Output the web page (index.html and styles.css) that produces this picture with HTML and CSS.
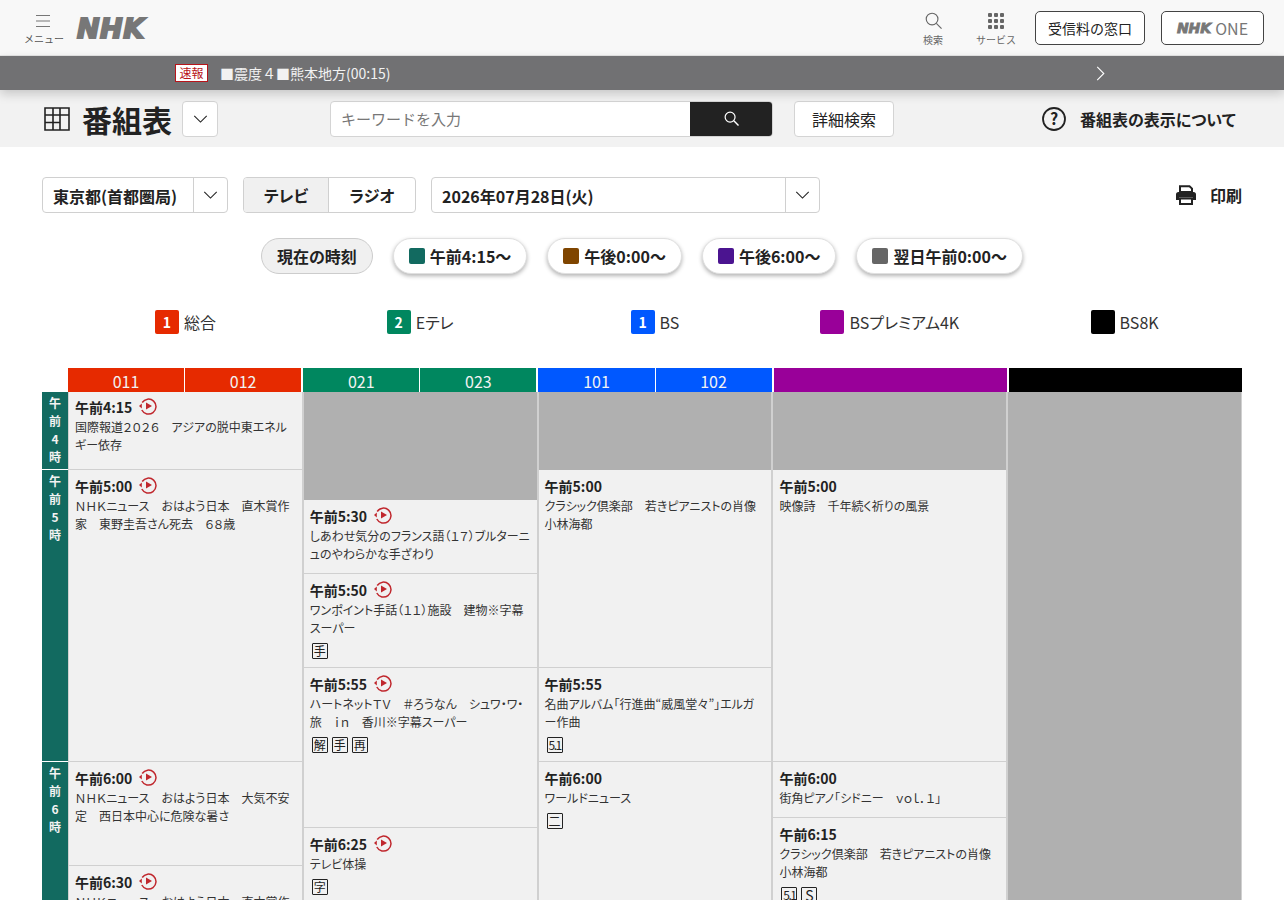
FILE: index.html
```html
<!DOCTYPE html>
<html lang="ja">
<head>
    <meta charset="UTF-8">
    <title>番組表</title>
    <link rel="stylesheet" href="styles.css">
</head>
<body>
    <header class="site-header">
        <div class="menu">
            <svg class="menu-icon" viewBox="0 0 14 14"><path d="M0 1.500h14M0 7h14M0 12.500h14" stroke="#777" stroke-width="1.2" fill="none"/></svg>
            <span>メニュー</span>
        </div>
        <span class="logo">NHK</span>
        <div class="header-right">
            <div class="head-tool tool-search">
                <svg viewBox="0 0 18 18" width="17" height="17"><circle cx="7.500" cy="7.500" r="6.200" stroke="#666" stroke-width="1.200" fill="none"/><path d="M12 12l5.500 5.500" stroke="#666" stroke-width="1.200"/></svg>
                <span>検索</span>
            </div>
            <div class="head-tool tool-service">
                <svg viewBox="0 0 16 16" width="16" height="16" fill="#666"><rect x="0" y="0" width="4" height="4" rx="1"/><rect x="6" y="0" width="4" height="4" rx="1"/><rect x="12" y="0" width="4" height="4" rx="1"/><rect x="0" y="6" width="4" height="4" rx="1"/><rect x="6" y="6" width="4" height="4" rx="1"/><rect x="12" y="6" width="4" height="4" rx="1"/><rect x="0" y="12" width="4" height="4" rx="1"/><rect x="6" y="12" width="4" height="4" rx="1"/><rect x="12" y="12" width="4" height="4" rx="1"/></svg>
                <span>サービス</span>
            </div>
            <a class="head-btn btn-fee">受信料の窓口</a>
            <a class="head-btn btn-one"><span class="one-logo">NHK</span><span class="one-word">ONE</span></a>
        </div>
    </header>

    <div class="ticker">
        <span class="ticker-badge">速報</span>
        <span class="ticker-text">■震度４■熊本地方(00:15)</span>
        <svg class="ticker-arrow" viewBox="0 0 9 16" width="9" height="15"><path d="M1 1l7 7-7 7" stroke="#fff" stroke-width="1.2" fill="none"/></svg>
    </div>

    <div class="sub-header">
        <svg class="title-icon" viewBox="0 0 26 24" width="26" height="24"><path d="M1 1h24v22H1zM1 8h24M1 15.500h15M9 1v22M16 1v22" stroke="#222" stroke-width="1.600" fill="none"/></svg>
        <h1>番組表</h1>
        <button class="square-btn"><svg viewBox="0 0 16 9" width="15" height="8"><path d="M1 1l7 7 7-7" stroke="#222" stroke-width="1.2" fill="none"/></svg></button>
        <div class="search-box">
            <span class="search-input">キーワードを入力</span>
            <span class="search-go"><svg viewBox="0 0 16 16" width="15" height="15"><circle cx="6.500" cy="6.500" r="5.300" stroke="#fff" stroke-width="1.300" fill="none"/><path d="M10.500 10.500l5 5" stroke="#fff" stroke-width="1.500"/></svg></span>
        </div>
        <button class="detail-btn">詳細検索</button>
        <div class="about">
            <svg viewBox="0 0 24 24" width="24" height="24"><circle cx="12" cy="12" r="11" stroke="#222" stroke-width="1.800" fill="none"/><text x="12" y="17.500" text-anchor="middle" class="about-mark">?</text></svg>
            <span>番組表の表示について</span>
        </div>
    </div>

    <main class="page">
        <div class="controls">
            <div class="select area-select"><span class="select-label">東京都(首都圏局)</span><span class="select-arrow"><svg viewBox="0 0 16 9" width="15" height="8"><path d="M1 1l7 7 7-7" stroke="#222" stroke-width="1.2" fill="none"/></svg></span></div>
            <div class="tabs"><span class="tab tab-on">テレビ</span><span class="tab">ラジオ</span></div>
            <div class="select date-select"><span class="select-label">2026年07月28日(火)</span><span class="select-arrow"><svg viewBox="0 0 16 9" width="15" height="8"><path d="M1 1l7 7 7-7" stroke="#222" stroke-width="1.2" fill="none"/></svg></span></div>
            <div class="print">
                <svg viewBox="0 0 20 20" width="20" height="20"><path d="M4 7V1.200h9.500L16 3.600V7z" fill="none" stroke="#222" stroke-width="2"/><path d="M2.500 7h15A2.500 2.500 0 0 1 20 9.500V15h-3v-2.500H3V15H0V9.500A2.500 2.500 0 0 1 2.500 7z" fill="#222"/><path d="M4 13.500h12V19H4z" fill="none" stroke="#222" stroke-width="2"/></svg>
                <span>印刷</span>
            </div>
        </div>

        <div class="pills">
            <span class="pill pill-now">現在の時刻</span>
            <span class="pill"><i class="swatch sw-morning"></i>午前4:15～</span>
            <span class="pill"><i class="swatch sw-noon"></i>午後0:00～</span>
            <span class="pill"><i class="swatch sw-evening"></i>午後6:00～</span>
            <span class="pill"><i class="swatch sw-night"></i>翌日午前0:00～</span>
        </div>

        <div class="legend">
            <div class="legend-item"><b class="chip ch-g">1</b>総合</div>
            <div class="legend-item"><b class="chip ch-e">2</b>Eテレ</div>
            <div class="legend-item"><b class="chip ch-bs">1</b>BS</div>
            <div class="legend-item"><b class="chip ch-4k"></b>BSプレミアム4K</div>
            <div class="legend-item"><b class="chip ch-8k"></b>BS8K</div>
        </div>

        <div class="channel-row">
            <div class="channel ch-g"><span>011</span><span>012</span></div>
            <div class="channel ch-e"><span>021</span><span>023</span></div>
            <div class="channel ch-bs"><span>101</span><span>102</span></div>
            <div class="channel ch-4k"></div>
            <div class="channel ch-8k"></div>
        </div>

        <div class="schedule">
            <div class="hours">
                <div class="hour" style="height:78px"><span>午</span><span>前</span><span>4</span><span>時</span></div>
                <div class="hour" style="height:292px"><span>午</span><span>前</span><span>5</span><span>時</span></div>
                <div class="hour" style="height:292px"><span>午</span><span>前</span><span>6</span><span>時</span></div>
            </div>

            <div class="col">
                <article class="prog" style="height:78px">
                    <p class="time">午前4:15<svg class="replay"><use href="#replay"/></svg></p>
                    <p class="desc">国際報道２０２６　アジアの脱中東エネルギー依存</p>
                </article>
                <article class="prog" style="height:292px">
                    <p class="time">午前5:00<svg class="replay"><use href="#replay"/></svg></p>
                    <p class="desc">ＮＨＫニュース　おはよう日本　直木賞作家　東野圭吾さん死去　６８歳</p>
                </article>
                <article class="prog" style="height:104px">
                    <p class="time">午前6:00<svg class="replay"><use href="#replay"/></svg></p>
                    <p class="desc">ＮＨＫニュース　おはよう日本　大気不安定　西日本中心に危険な暑さ</p>
                </article>
                <article class="prog" style="height:104px">
                    <p class="time">午前6:30<svg class="replay"><use href="#replay"/></svg></p>
                    <p class="desc">ＮＨＫニュース　おはよう日本　直木賞作家</p>
                </article>
            </div>

            <div class="col">
                <div class="blank" style="height:108px"></div>
                <article class="prog" style="height:74px">
                    <p class="time">午前5:30<svg class="replay"><use href="#replay"/></svg></p>
                    <p class="desc">しあわせ気分のフランス語（１７）ブルターニュのやわらかな手ざわり</p>
                </article>
                <article class="prog" style="height:94px">
                    <p class="time">午前5:50<svg class="replay"><use href="#replay"/></svg></p>
                    <p class="desc">ワンポイント手話（１１）施設　建物※字幕スーパー</p>
                    <div class="marks"><span class="mark">手</span></div>
                </article>
                <article class="prog" style="height:160px">
                    <p class="time">午前5:55<svg class="replay"><use href="#replay"/></svg></p>
                    <p class="desc">ハートネットＴＶ　＃ろうなん　シュワ・ワ・旅　ｉｎ　香川※字幕スーパー</p>
                    <div class="marks"><span class="mark">解</span><span class="mark">手</span><span class="mark">再</span></div>
                </article>
                <article class="prog" style="height:100px">
                    <p class="time">午前6:25<svg class="replay"><use href="#replay"/></svg></p>
                    <p class="desc">テレビ体操</p>
                    <div class="marks"><span class="mark">字</span></div>
                </article>
            </div>

            <div class="col">
                <div class="blank" style="height:78px"></div>
                <article class="prog" style="height:198px">
                    <p class="time">午前5:00</p>
                    <p class="desc">クラシック倶楽部　若きピアニストの肖像　小林海都</p>
                </article>
                <article class="prog" style="height:94px">
                    <p class="time">午前5:55</p>
                    <p class="desc">名曲アルバム「行進曲“威風堂々”」エルガー作曲</p>
                    <div class="marks"><span class="mark mark-num">5.1</span></div>
                </article>
                <article class="prog" style="height:160px">
                    <p class="time">午前6:00</p>
                    <p class="desc">ワールドニュース</p>
                    <div class="marks"><span class="mark">二</span></div>
                </article>
            </div>

            <div class="col">
                <div class="blank" style="height:78px"></div>
                <article class="prog" style="height:292px">
                    <p class="time">午前5:00</p>
                    <p class="desc">映像詩　千年続く祈りの風景</p>
                </article>
                <article class="prog" style="height:56px">
                    <p class="time">午前6:00</p>
                    <p class="desc">街角ピアノ「シドニー　ｖｏｌ．１」</p>
                </article>
                <article class="prog" style="height:100px">
                    <p class="time">午前6:15</p>
                    <p class="desc">クラシック倶楽部　若きピアニストの肖像　小林海都</p>
                    <div class="marks"><span class="mark mark-num">5.1</span><span class="mark mark-s">S</span></div>
                </article>
            </div>

            <div class="col">
                <div class="blank" style="height:530px"></div>
            </div>
        </div>
    </main>

    <svg class="defs" width="0" height="0">
        <symbol id="replay" viewBox="0 0 18 18">
            <path d="M3.200 5.500A7.500 7.500 0 1 1 2.800 13" fill="none" stroke="#c0272d" stroke-width="1.500"/>
            <path d="M0 9l2.800-2.500v5z" fill="#c0272d"/>
            <path d="M7 5.500l6 3.500-6 3.500z" fill="#c0272d"/>
        </symbol>
    </svg>
</body>
</html>
```

FILE: styles.css
```css
* {
    margin: 0;
    padding: 0;
    box-sizing: border-box;
}
html, body {
    height: 900px;
    overflow: hidden;
}
body {
    background: #fff;
    color: #222;
    font-family: "Noto Sans CJK JP", "Noto Sans", sans-serif;
    font-feature-settings: "palt";
}
button {
    font-family: inherit;
    font-feature-settings: inherit;
    color: inherit;
    background: #fff;
    cursor: pointer;
}

/* site header */
.site-header {
    display: flex;
    align-items: center;
    height: 56px;
    padding-left: 24px;
    padding-right: 20px;
    background: #f8f8f8;
    border-bottom: 1px solid #e6e6e6;
}
.menu {
    width: 40px;
    display: flex;
    flex-direction: column;
    align-items: center;
    padding-top: 4px;
    color: #555;
    font-size: 10px;
    font-feature-settings: normal;
    line-height: 14px;
}
.menu-icon {
    width: 14px;
    height: 14px;
    margin-bottom: 4px;
    margin-right: 2px;
}
.logo {
    margin-left: 13px;
    margin-top: 3px;
    font-family: "DejaVu Sans", sans-serif;
    font-weight: 700;
    font-style: italic;
    font-size: 27px;
    line-height: 26px;
    letter-spacing: 0.5px;
    color: #777;
    -webkit-text-stroke: 2px #777;
}
.header-right {
    display: flex;
    align-items: center;
    margin-left: auto;
}
.head-tool {
    display: flex;
    flex-direction: column;
    align-items: center;
    padding-top: 4px;
    color: #666;
    font-size: 10px;
    font-feature-settings: normal;
    line-height: 14px;
}
.head-tool svg {
    margin-bottom: 4px;
}
.tool-search {
    margin-right: 33px;
}
.tool-service {
    margin-right: 19px;
}
.head-btn {
    display: flex;
    align-items: center;
    justify-content: center;
    height: 34px;
    background: #fff;
    border: 1px solid #444;
    border-radius: 5px;
    font-size: 14px;
    font-feature-settings: normal;
}
.btn-fee {
    width: 110px;
    margin-right: 16px;
}
.btn-one {
    width: 103px;
    color: #777;
}
.one-logo {
    font-family: "DejaVu Sans", sans-serif;
    font-weight: 700;
    font-style: italic;
    font-size: 14px;
    -webkit-text-stroke: 0.9px #777;
    margin-right: 4px;
}
.one-word {
    font-size: 16px;
}

/* ticker */
.ticker {
    position: relative;
    display: flex;
    align-items: center;
    height: 34px;
    padding-left: 175px;
    background: #717173;
    box-shadow: 0 4px 10px rgba(0,0,0,0.18);
    color: #f2f2f2;
    font-size: 14px;
    font-feature-settings: normal;
}
.ticker-badge {
    width: 33px;
    height: 18px;
    margin-right: 12px;
    background: #fff;
    border: 1px solid #b8141a;
    color: #b8141a;
    font-size: 12px;
    line-height: 16px;
    text-align: center;
}
.ticker-arrow {
    margin-left: auto;
    margin-right: 179px;
}

/* title bar */
.sub-header {
    display: flex;
    align-items: center;
    height: 57px;
    padding-left: 44px;
    background: #f2f2f2;
}
.sub-header h1 {
    margin-left: 12px;
    font-size: 30px;
    line-height: 36px;
    font-weight: 700;
    font-feature-settings: normal;
}
.square-btn {
    display: flex;
    align-items: center;
    justify-content: center;
    width: 36px;
    height: 36px;
    margin-left: 10px;
    border: 1px solid #d4d4d4;
    border-radius: 4px;
}
.search-box {
    display: flex;
    width: 443px;
    height: 36px;
    margin-left: 112px;
    background: #fff;
    border: 1px solid #d4d4d4;
    border-radius: 4px;
    overflow: hidden;
}
.search-input {
    flex: 1;
    padding-left: 10px;
    color: #777;
    font-size: 15px;
    font-feature-settings: normal;
    line-height: 34px;
}
.search-go {
    display: flex;
    align-items: center;
    justify-content: center;
    width: 82px;
    background: #222;
}
.detail-btn {
    width: 100px;
    height: 36px;
    margin-left: 21px;
    border: 1px solid #d4d4d4;
    border-radius: 4px;
    font-size: 16px;
}
.about {
    display: flex;
    align-items: center;
    margin-left: 148px;
    font-size: 16px;
    font-weight: 700;
}
.about span {
    margin-left: 14px;
}
.about-mark {
    font-size: 16px;
    font-weight: 700;
    fill: #222;
}

/* controls */
.page {
    padding: 30px 42px 0;
}
.controls {
    display: flex;
    align-items: center;
    height: 36px;
}
.select {
    display: flex;
    height: 36px;
    border: 1px solid #d0d0d0;
    border-radius: 4px;
    font-size: 16px;
    font-weight: 700;
}
.area-select {
    width: 186px;
}
.date-select {
    width: 389px;
    margin-left: 15px;
}
.select-label {
    flex: 1;
    padding-left: 10px;
    line-height: 36px;
}
.select-arrow {
    display: flex;
    align-items: center;
    justify-content: center;
    width: 34px;
    border-left: 1px solid #d0d0d0;
}
.tabs {
    display: flex;
    width: 173px;
    height: 36px;
    margin-left: 15px;
    border: 1px solid #d0d0d0;
    border-radius: 4px;
    overflow: hidden;
}
.tab {
    flex: 1;
    font-size: 16px;
    font-weight: 700;
    line-height: 34px;
    text-align: center;
}
.tab-on {
    flex: none;
    width: 85px;
    background: #f0f0f0;
    border-right: 1px solid #d0d0d0;
}
.print {
    display: flex;
    align-items: center;
    margin-left: auto;
    font-size: 16px;
    font-weight: 700;
}
.print span {
    margin-left: 14px;
}

/* jump pills */
.pills {
    display: flex;
    justify-content: center;
    gap: 20px;
    margin-top: 25px;
}
.pill {
    display: flex;
    align-items: center;
    height: 36px;
    padding: 0 15px;
    background: #fff;
    border: 1px solid #e0e0e0;
    border-radius: 18px;
    box-shadow: 0 2px 4px rgba(0,0,0,0.3);
    font-size: 16px;
    font-weight: 700;
}
.pill-now {
    background: #f0f0f0;
    border-color: #ccc;
    box-shadow: none;
}
.swatch {
    width: 16px;
    height: 16px;
    margin-right: 5px;
    border-radius: 2px;
}
.sw-morning { background: #126a60; }
.sw-noon { background: #7f4500; }
.sw-evening { background: #4b1490; }
.sw-night { background: #666; }

/* channel colours */
.ch-g { background: #e62a00; }
.ch-e { background: #00875f; }
.ch-bs { background: #0058ff; }
.ch-4k { background: #990099; }
.ch-8k { background: #000; }

/* legend */
.legend {
    display: grid;
    grid-template-columns: repeat(5, 1fr);
    margin-top: 36px;
    margin-left: 26px;
}
.legend-item {
    display: flex;
    align-items: center;
    justify-content: center;
    height: 24px;
    font-size: 16px;
    color: #333;
}
.chip {
    width: 24px;
    height: 24px;
    margin-right: 5px;
    border-radius: 2px;
    color: #fff;
    font-size: 14px;
    line-height: 24px;
    text-align: center;
}

/* schedule */
.channel-row {
    display: grid;
    grid-template-columns: repeat(5, 1fr);
    column-gap: 2px;
    height: 24px;
    margin-top: 34px;
    margin-left: 26px;
}
.channel {
    display: flex;
    color: #f2f2f2;
    font-size: 16px;
    line-height: 26px;
    text-align: center;
}
.channel span {
    flex: 1;
}
.channel span + span {
    border-left: 1px solid #fff;
}
.schedule {
    display: grid;
    grid-template-columns: 26px repeat(5, 1fr);
}
.hour {
    display: flex;
    flex-direction: column;
    align-items: center;
    padding-top: 2px;
    background: #126a60;
    border-bottom: 1px solid #fff;
    color: #f2f2f2;
    font-size: 12px;
    font-weight: 700;
    line-height: 18px;
}
.col {
    display: flex;
    flex-direction: column;
}
.blank {
    background: #b0b0b0;
    border-left: 1px solid #d0d0d0;
    border-right: 1px solid #d0d0d0;
}
.prog {
    padding: 6px 6px 0;
    background: #f1f1f1;
    border-left: 1px solid #d0d0d0;
    border-right: 1px solid #d0d0d0;
    border-bottom: 1px solid #d0d0d0;
}
.prog:first-child {
    padding-top: 5px;
}
.time {
    display: flex;
    align-items: center;
    font-size: 14px;
    font-weight: 700;
    line-height: 20px;
}
.replay {
    width: 18px;
    height: 18px;
    margin-left: 7px;
    margin-top: -3px;
}
.desc {
    margin-top: 1px;
    color: #333;
    font-size: 12px;
    line-height: 18px;
    line-break: loose;
}
.marks {
    display: flex;
    gap: 4px;
    margin-top: 6px;
    padding-left: 2px;
}
.mark {
    width: 16px;
    height: 16px;
    border: 1px solid #222;
    border-radius: 1px;
    font-size: 12px;
    line-height: 14px;
    text-align: center;
}
.mark-num {
    letter-spacing: -1.5px;
}
.mark-s {
    font-size: 14px;
}
.defs {
    display: block;
}
```
